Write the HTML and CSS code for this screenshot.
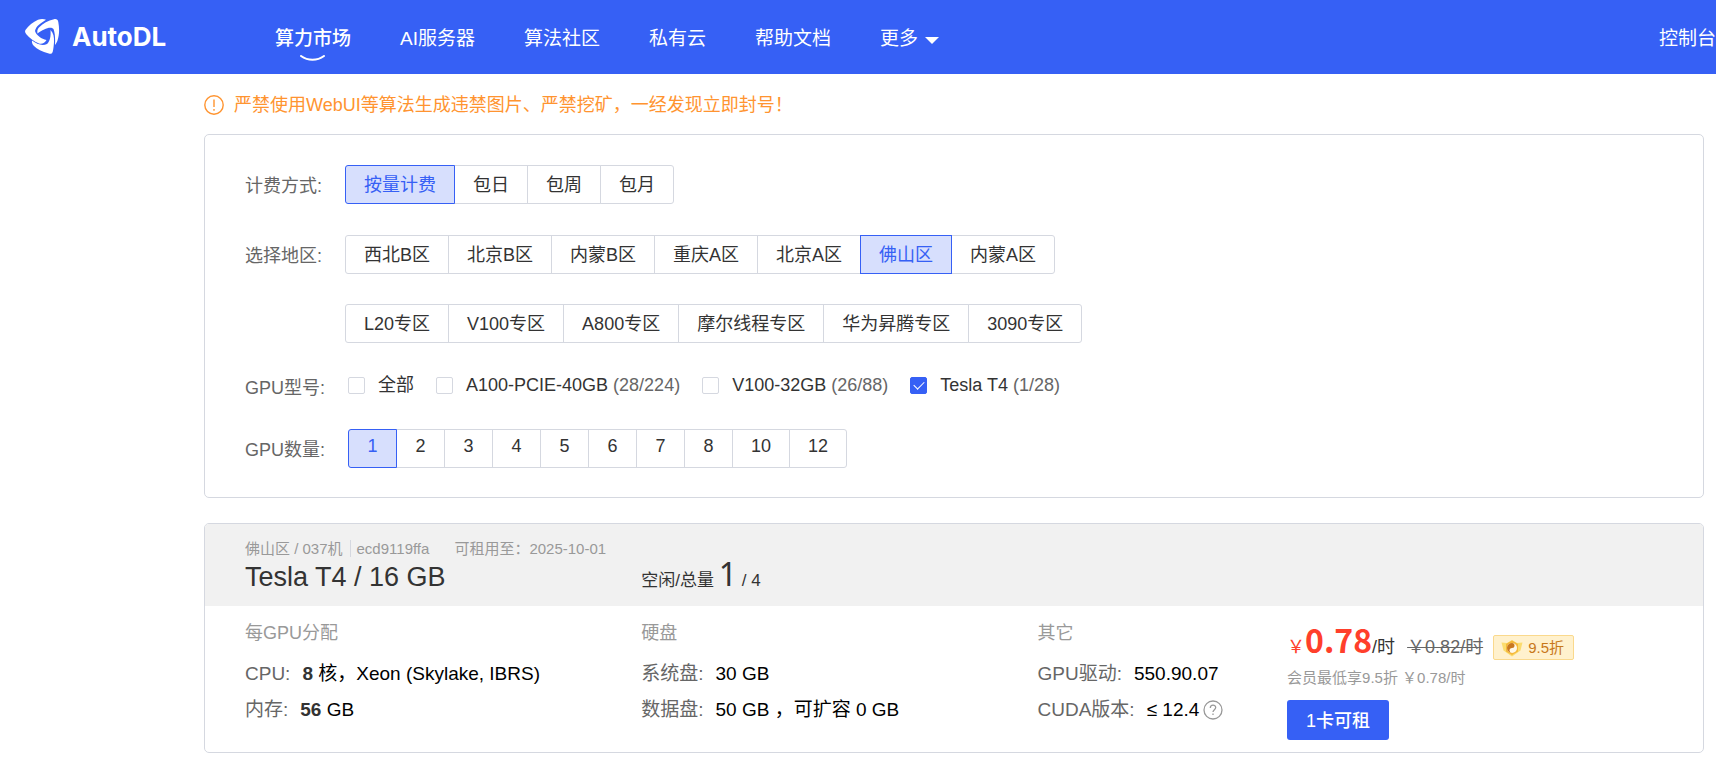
FILE: index.html
```
<!DOCTYPE html>
<html lang="zh-CN">
<head>
    <meta charset="UTF-8">
    <meta name="viewport" content="width=device-width, initial-scale=1.0">
    <title>AutoDL</title>
    <link rel="stylesheet" href="styles.css">
</head>
<body>
    <header class="header">
        <a href="#" class="logo">
            <svg class="logo-icon" viewBox="0 0 36 36" fill="#fff">
                <path d="M21 .8C19 0 16-.2 13 .8 8 3 3.500 7 .8 10.500c-1.300 1.800-.8 3.200.5 4.800C4.500 19 9 22.500 14 24.500c3 .8 6-.5 7.500-3.500-5-1-10-4.500-11.500-9C11 7 16 4 21 .8z"/>
                <path d="M12.500 14.500c-.5-3 0-4.500 2-6.500C18 4.500 23 1.500 29 .2c2.500-.4 3.800.3 4.300 2.800 1.300 7 1 13-.8 18.500-.6 1.800-1.300 3-2.500 4.500.3-6 .2-11-1.500-16-3-3-10 0-16 4.500z"/>
                <path d="M25.500 11c3 3 3.800 7 3.500 12-.2 4-.6 7-1.200 9.500-.6 2.300-2 2.700-4 2C17 32.500 12 30 9 27c-1.800-1.800-2.300-3.500-2-5.500 5 4 10.500 5.500 15 3.500 3-2.500 4-8 3.500-14z"/>
            </svg>
            <span class="logo-text">AutoDL</span>
        </a>
        <nav class="nav">
            <a href="#" class="nav-link active">算力市场
                <svg class="nav-arc" viewBox="0 0 25 6" fill="none" stroke="#fff" stroke-width="2" stroke-linecap="round"><path d="M1 1C8 6 17 6 24 1"/></svg>
            </a>
            <a href="#" class="nav-link">AI服务器</a>
            <a href="#" class="nav-link">算法社区</a>
            <a href="#" class="nav-link">私有云</a>
            <a href="#" class="nav-link">帮助文档</a>
            <a href="#" class="nav-link">更多<span class="caret"></span></a>
        </nav>
        <a href="#" class="nav-link console">控制台</a>
    </header>

    <main class="main">
        <p class="notice">
            <svg class="notice-icon" viewBox="0 0 20 20" fill="none" stroke="#ff9430" stroke-width="1.4"><circle cx="10" cy="10" r="9.200"/><path d="M10 4.500v7.500M10 14v1.700"/></svg>
            严禁使用WebUI等算法生成违禁图片、严禁挖矿，一经发现立即封号！
        </p>

        <section class="card filters">
            <div class="filter-row">
                <span class="filter-label">计费方式:</span>
                <div class="btn-group">
                    <button class="btn active">按量计费</button>
                    <button class="btn">包日</button>
                    <button class="btn">包周</button>
                    <button class="btn">包月</button>
                </div>
            </div>
            <div class="filter-row">
                <span class="filter-label">选择地区:</span>
                <div class="region-groups">
                    <div class="btn-group">
                        <button class="btn">西北B区</button>
                        <button class="btn">北京B区</button>
                        <button class="btn">内蒙B区</button>
                        <button class="btn">重庆A区</button>
                        <button class="btn">北京A区</button>
                        <button class="btn active">佛山区</button>
                        <button class="btn">内蒙A区</button>
                    </div>
                    <div class="btn-group">
                        <button class="btn">L20专区</button>
                        <button class="btn">V100专区</button>
                        <button class="btn">A800专区</button>
                        <button class="btn">摩尔线程专区</button>
                        <button class="btn">华为昇腾专区</button>
                        <button class="btn">3090专区</button>
                    </div>
                </div>
            </div>
            <div class="filter-row checks">
                <span class="filter-label">GPU型号:</span>
                <div class="check-group">
                    <label class="check"><input type="checkbox"><span>全部</span></label>
                    <label class="check"><input type="checkbox"><span>A100-PCIE-40GB <span class="count">(28/224)</span></span></label>
                    <label class="check"><input type="checkbox"><span>V100-32GB <span class="count">(26/88)</span></span></label>
                    <label class="check"><input type="checkbox" checked><span>Tesla T4 <span class="count">(1/28)</span></span></label>
                </div>
            </div>
            <div class="filter-row">
                <span class="filter-label">GPU数量:</span>
                <div class="btn-group">
                    <button class="btn active">1</button>
                    <button class="btn">2</button>
                    <button class="btn">3</button>
                    <button class="btn">4</button>
                    <button class="btn">5</button>
                    <button class="btn">6</button>
                    <button class="btn">7</button>
                    <button class="btn">8</button>
                    <button class="btn">10</button>
                    <button class="btn">12</button>
                </div>
            </div>
        </section>

        <section class="card machine">
            <div class="machine-head">
                <div class="machine-meta">
                    <span class="machine-region">佛山区 / 037机</span>
                    <span class="machine-id">ecd9119ffa</span>
                    <span>可租用至：2025-10-01</span>
                </div>
                <div class="machine-grid machine-title">
                    <h2 class="gpu-name">Tesla T4 / 16 GB</h2>
                    <div class="stock">空闲/总量 <span class="stock-free">1</span> / 4</div>
                </div>
            </div>
            <div class="machine-grid machine-body">
                <div class="spec">
                    <h3 class="spec-title">每GPU分配</h3>
                    <p class="spec-row"><span class="spec-name">CPU:</span><span><b>8</b> 核，Xeon (Skylake, IBRS)</span></p>
                    <p class="spec-row"><span class="spec-name">内存:</span><span><b>56</b> GB</span></p>
                </div>
                <div class="spec">
                    <h3 class="spec-title">硬盘</h3>
                    <p class="spec-row"><span class="spec-name">系统盘:</span><span>30 GB</span></p>
                    <p class="spec-row"><span class="spec-name">数据盘:</span><span>50 GB ，可扩容 0 GB</span></p>
                </div>
                <div class="spec">
                    <h3 class="spec-title">其它</h3>
                    <p class="spec-row"><span class="spec-name">GPU驱动:</span><span>550.90.07</span></p>
                    <p class="spec-row"><span class="spec-name">CUDA版本:</span><span>≤ 12.4</span>
                        <svg class="help-icon" viewBox="0 0 20 20" fill="none" stroke="#999" stroke-width="1.3"><circle cx="10" cy="10" r="9"/><path d="M7.300 8c0-3.700 5.400-3.700 5.400-.4 0 2-2.700 2.200-2.700 4.400M10 13.500v1.500"/></svg>
                    </p>
                </div>
                <div class="price-col">
                    <div class="price">
                        <span class="yen">￥</span><strong class="amount">0.78</strong><span class="unit">/时</span>
                        <del class="old-price">￥0.82/时</del>
                        <span class="discount"><svg class="discount-icon" viewBox="0 0 22 18">
                                <path fill="#fbdc6e" d="M.5 3.500L6 4l5-3 5 3 5.500-.5-2 8-3.500 2.500-5 3.500L6 14l-3.500-2.500z"/>
                                <path fill="#f5b83a" d="M5 5l6-3.500L17 5v7.500L11 16l-6-3.500z"/>
                                <circle cx="11" cy="9" r="5" fill="#fff8e6"/>
                                <path fill="#c9781f" d="M11 4a2.500 2.500 0 0 1 0 5 2.500 2.500 0 0 0 0 5 5 5 0 0 1 0-10z"/>
                            </svg>9.5折</span>
                    </div>
                    <p class="member">会员最低享9.5折 ￥0.78/时</p>
                    <button class="rent">1卡可租</button>
                </div>
            </div>
        </section>
    </main>
</body>
</html>
```

FILE: styles.css
```
* {
    box-sizing: border-box;
}
body {
    margin: 0;
    font-family: "Liberation Sans", "Noto Sans CJK SC", sans-serif;
    font-size: 18px;
    line-height: 24px;
    color: #333;
    background: #fff;
}
h2, h3, p {
    margin: 0;
    font-weight: normal;
}
button {
    font-family: inherit;
    cursor: pointer;
}

/* header */
.header {
    display: flex;
    align-items: center;
    height: 74px;
    padding-left: 25px;
    background: #3660f5;
}
.logo {
    display: flex;
    align-items: center;
    gap: 11px;
    width: 250px;
    color: #fff;
    text-decoration: none;
}
.logo-icon {
    width: 36px;
    height: 36px;
}
.logo-text {
    font-family: Inter, sans-serif;
    font-size: 26px;
    font-weight: bold;
}
.nav {
    display: flex;
    gap: 49px;
}
.nav-link {
    position: relative;
    padding-top: 4px;
    font-size: 19px;
    color: #fff;
    text-decoration: none;
    white-space: nowrap;
}
.nav-link.active {
    font-weight: 500;
}
.nav-arc {
    position: absolute;
    left: 25px;
    bottom: -10px;
    width: 25px;
    height: 6px;
}
.caret {
    display: inline-block;
    margin-left: 7px;
    vertical-align: 1px;
    border: 7px solid transparent;
    border-top-color: #fff;
    border-bottom: 0;
}
.console {
    margin-left: auto;
}

/* content */
.main {
    margin: 0 12px 0 204px;
}
.notice {
    display: flex;
    align-items: center;
    gap: 10px;
    height: 60px;
    padding-top: 2px;
    color: #ff9430;
}
.notice-icon {
    width: 20px;
    height: 20px;
}
.card {
    border: 1px solid #d5d8e0;
    border-radius: 5px;
    overflow: hidden;
}

/* filters */
.filters {
    display: flex;
    flex-direction: column;
    gap: 31px;
    padding: 30px 40px 29px;
}
.filter-row {
    display: flex;
    gap: 23px;
}
.filter-label {
    padding-top: 9px;
    color: #666;
    white-space: nowrap;
}
.region-groups {
    display: flex;
    flex-direction: column;
    gap: 30px;
}
.btn-group {
    display: flex;
}
.btn {
    min-width: 49px;
    height: 39px;
    padding: 0 18px 4px;
    border: 1px solid #d5d8e0;
    background: #fff;
    color: #333;
    font-size: 18px;
    white-space: nowrap;
}
.btn + .btn {
    margin-left: -1px;
}
.btn:first-child {
    border-radius: 3px 0 0 3px;
}
.btn:last-child {
    border-radius: 0 3px 3px 0;
}
.btn.active {
    position: relative;
    border-color: #3660f5;
    background: #d7dffd;
    color: #3660f5;
}
.checks {
    height: 24px;
}
.checks .filter-label {
    padding-top: 2px;
}
.check-group {
    display: flex;
    gap: 22px;
}
.check {
    display: flex;
    align-items: center;
    gap: 13px;
    height: 22px;
    cursor: pointer;
}
.check input {
    appearance: none;
    width: 17px;
    height: 17px;
    margin: 0;
    border: 1px solid #d5d8e0;
    border-radius: 2px;
    background: #fff;
}
.check input:checked {
    display: grid;
    place-items: center;
    border-color: #3660f5;
    background: #3660f5;
}
.check input:checked::before {
    content: "";
    width: 9px;
    height: 5px;
    margin-bottom: 3px;
    border: solid #fff;
    border-width: 0 0 1px 1px;
    transform: rotate(-45deg);
}
.count {
    color: #666;
}

/* machine */
.machine {
    margin-top: 25px;
}
.machine-grid {
    display: grid;
    grid-template-columns: 27fr 27fr 17fr 28fr;
    padding: 0 5px 0 40px;
}
.machine-head {
    height: 82px;
    padding-top: 16px;
    background: #f1f1f1;
}
.machine-meta {
    display: flex;
    align-items: center;
    padding-left: 40px;
    font-size: 15px;
    line-height: 17px;
    color: #999;
}
.machine-region {
    padding-right: 7px;
    border-right: 1px solid #d5d8e0;
}
.machine-id {
    padding: 0 25px 0 6px;
}
.machine-title {
    align-items: baseline;
}
.gpu-name {
    font-size: 27px;
    line-height: 40px;
}
.stock {
    font-size: 17px;
}
.stock-free {
    font-family: "Noto Sans", sans-serif;
    font-size: 32px;
}
.machine-body {
    padding-top: 15px;
    padding-bottom: 12px;
}
.spec-title {
    margin-bottom: 17px;
    font-size: 18px;
    color: #999;
}
.spec-row {
    display: flex;
    align-items: center;
    margin-bottom: 12px;
    font-size: 19px;
    color: #000;
}
.spec-row b {
    color: #333;
}
.spec-name {
    margin-right: 12px;
    color: #666;
}
.help-icon {
    width: 20px;
    height: 20px;
    margin-left: 4px;
}
.price {
    display: flex;
    align-items: baseline;
    height: 45px;
}
.yen {
    color: #ff3f2b;
}
.amount {
    font-family: "Noto Sans CJK SC", sans-serif;
    font-size: 32px;
    line-height: 36px;
    color: #ff3f2b;
}
.old-price {
    margin-left: 12px;
    color: #666;
}
.discount {
    margin-left: 10px;
    padding: 0 9px 0 7px;
    border: 1px solid #fad98d;
    border-radius: 2px;
    background: #fff1cd;
    font-size: 15px;
    line-height: 23px;
    color: #c8781a;
}
.discount-icon {
    width: 22px;
    height: 18px;
    margin-right: 5px;
    vertical-align: -4px;
}
.member {
    margin-bottom: 10px;
    font-size: 15px;
    color: #999;
}
.rent {
    display: block;
    height: 40px;
    padding: 0 19px 2px;
    border: 0;
    border-radius: 3px;
    background: #3660f5;
    color: #fff;
    font-size: 18px;
    font-weight: 500;
}
```
